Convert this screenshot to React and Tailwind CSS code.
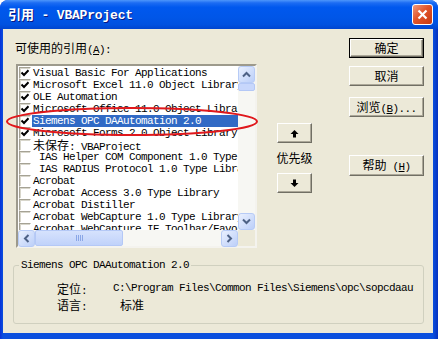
import React from "react";

const mono = "font-['Liberation_Mono',monospace] text-[11px] tracking-[-0.6px]";
const cjk = "font-['Noto_Sans_CJK_SC',sans-serif] text-[12px] tracking-normal";

function Zh({ children }) {
  return <span className={cjk}>{children}</span>;
}

const rows = [
  { on: true, text: "Visual Basic For Applications" },
  { on: true, text: "Microsoft Excel 11.0 Object Library" },
  { on: true, text: "OLE Automation" },
  { on: true, text: "Microsoft Office 11.0 Object Library" },
  { on: true, sel: true, text: "Siemens OPC DAAutomation 2.0" },
  { on: true, text: "Microsoft Forms 2.0 Object Library" },
  { on: false, zh: "未保存", text: ": VBAProject" },
  { on: false, text: " IAS Helper COM Component 1.0 Type Library" },
  { on: false, text: " IAS RADIUS Protocol 1.0 Type Library" },
  { on: false, text: "Acrobat" },
  { on: false, text: "Acrobat Access 3.0 Type Library" },
  { on: false, text: "Acrobat Distiller" },
  { on: false, text: "Acrobat WebCapture 1.0 Type Library" },
  { on: false, text: "Acrobat WebCapture IE Toolbar/Favorites Context Menu" },
];

function Check({ on }) {
  return (
    <div className="w-[12px] h-[12px] shrink-0 bg-white border border-t-[#A5A294] border-l-[#A5A294] border-r-white border-b-white shadow-[inset_1px_1px_0_#D8D6CB]">
      {on && (
        <svg width="10" height="10" viewBox="0 0 10 10">
          <path d="M1.5 4.5 L4 7 L8.5 2.2" stroke="#000" strokeWidth="2" fill="none" />
        </svg>
      )}
    </div>
  );
}

function Chevron({ dir }) {
  const rot = { up: 0, down: 180, left: 270, right: 90 }[dir];
  return (
    <svg width="9" height="9" viewBox="0 0 9 9" style={{ transform: `rotate(${rot}deg)` }}>
      <path d="M1 6.5 L4.5 3 L8 6.5" stroke="#4D6185" strokeWidth="2" fill="none" />
    </svg>
  );
}

function SBtn({ dir }) {
  return (
    <div className="w-[17px] h-[17px] shrink-0 flex items-center justify-center rounded-[3px] border border-[#B7CBF6] bg-[linear-gradient(135deg,#E9F0FE,#BCCFF9)]">
      <Chevron dir={dir} />
    </div>
  );
}

function Btn({ children, def, className = "" }) {
  return (
    <div className={`${def ? "border border-black" : ""} ${className}`}>
      <div className="h-full flex items-center justify-center bg-[#ECE9D8] border border-t-white border-l-white border-r-[#716F64] border-b-[#716F64] shadow-[inset_-1px_-1px_0_#ACA899] leading-[12px]">
        {children}
      </div>
    </div>
  );
}

function Arrow({ down }) {
  return (
    <svg width="9" height="9" viewBox="0 0 9 9" style={{ transform: down ? "rotate(180deg)" : undefined }}>
      <path d="M4.5 1 L8.5 5 L6 5 L6 8.5 L3 8.5 L3 5 L0.5 5 Z" fill="#000" />
    </svg>
  );
}

function RefList() {
  return (
    <div className="w-[241px] h-[184px] bg-white border-2 border-t-[#9D9A8C] border-l-[#9D9A8C] border-r-[#F4F3EE] border-b-[#F4F3EE] flex flex-col">
      <div className="flex h-[164px]">
        <div className="w-[220px] h-[164px] overflow-hidden pt-[1px]">
          {rows.map((r, i) => (
            <div key={i} className="flex h-[12px] items-center">
              <div className="ml-[1px]">
                <Check on={r.on} />
              </div>
              <div
                className={`ml-[1px] pl-[1px] flex-1 h-[12px] leading-[12px] whitespace-pre overflow-hidden ${mono} ${
                  r.sel ? "bg-[#316AC5] text-white" : "text-black"
                }`}
              >
                {r.zh && <Zh>{r.zh}</Zh>}
                {r.text}
              </div>
            </div>
          ))}
        </div>
        <div className="w-[17px] h-[164px] flex flex-col bg-[#F7F7F3]">
          <SBtn dir="up" />
          <div className="h-[8px] rounded-[2px] border border-[#B4C8F6] bg-[#C8D7FC]" />
          <div className="flex-1" />
          <SBtn dir="down" />
        </div>
      </div>
      <div className="flex h-[16px]">
        <div className="w-[220px] flex bg-[#F7F7F3]">
          <SBtn dir="left" />
          <div className="w-[88px] h-[16px] rounded-[2px] border border-[#B4C8F6] bg-[linear-gradient(180deg,#D6E2FD,#C0D2FA)] flex items-center justify-center gap-[1px]">
            {[0, 1, 2, 3].map((k) => (
              <div key={k} className="w-[1px] h-[6px] bg-[#8AA6E6]" />
            ))}
          </div>
          <div className="flex-1" />
          <SBtn dir="right" />
        </div>
        <div className="w-[17px] bg-[#ECE9D8]" />
      </div>
    </div>
  );
}

export default function App() {
  return (
    <div className="w-[438px] h-[339px] bg-white">
      <div className="relative w-[438px] h-[339px] rounded-t-[8px] overflow-hidden bg-[linear-gradient(90deg,#0831D9_0px,#0A4FDE_3px,#0A4FDE_433px,#0631BE_438px)] flex flex-col">
        <div className="h-[29px] shrink-0 flex items-center pl-[8px] pr-[5px] bg-[linear-gradient(180deg,#4D96FB_0%,#1C6CF3_10%,#0058EE_25%,#0056E8_60%,#0051E0_85%,#0045CF_100%)]">
          <div className="flex-1 text-white font-bold [text-shadow:1px_1px_#0A1883] leading-[14px] whitespace-pre">
            <span className="font-['Noto_Sans_CJK_SC',sans-serif] text-[13px]">引用</span>
            <span className="font-['Liberation_Mono',monospace] text-[13px] tracking-[-0.2px]"> - VBAProject</span>
          </div>
          <div className="w-[21px] h-[21px] rounded-[3px] border border-white bg-[linear-gradient(135deg,#F09A7E,#E2542A_45%,#C53A12)] flex items-center justify-center">
            <svg width="11" height="11" viewBox="0 0 11 11">
              <path d="M1.5 1.5 L9.5 9.5 M9.5 1.5 L1.5 9.5" stroke="#fff" strokeWidth="2.2" />
            </svg>
          </div>
        </div>

        <div className="ml-[3px] mr-[5px] h-[304px] bg-[#ECE9D8] text-black flex flex-col">
          <div className="flex h-[219px] pl-[13px]">
            <div className="w-[241px]">
              <div className="mt-[12px] ml-[-1px] h-[12px] leading-[12px] whitespace-pre">
                <Zh>可使用的引用</Zh>
                <span className={mono}>
                  (<span className="underline">A</span>):
                </span>
              </div>
              <div className="mt-[11px]">
                <RefList />
              </div>
            </div>

            <div className="ml-[20px] w-[35px] flex flex-col items-center">
              <Btn className="mt-[94px] h-[20px] w-[35px]">
                <Arrow />
              </Btn>
              <div className="mt-[8px] h-[12px] leading-[12px] whitespace-nowrap">
                <Zh>优先级</Zh>
              </div>
              <Btn className="mt-[10px] h-[20px] w-[35px]">
                <Arrow down />
              </Btn>
            </div>

            <div className="ml-[37px] w-[75px] flex flex-col">
              <Btn def className="mt-[9px] h-[20px]">
                <Zh>确定</Zh>
              </Btn>
              <Btn className="mt-[8px] h-[20px]">
                <Zh>取消</Zh>
              </Btn>
              <Btn className="mt-[11px] h-[20px]">
                <span className="whitespace-pre">
                  <Zh>浏览</Zh>
                  <span className={mono}>
                    (<span className="underline">B</span>)...
                  </span>
                </span>
              </Btn>
              <Btn className="mt-[38px] h-[21px]">
                <span className="whitespace-pre">
                  <Zh>帮助</Zh>
                  <span className={mono}>
                    {" "}(<span className="underline">H</span>)
                  </span>
                </span>
              </Btn>
            </div>
          </div>

          <fieldset className="ml-[10px] mt-[11px] w-[411px] h-[65px] border border-[#D0D0BF] rounded-[3px] pl-[5px]">
            <legend className={`px-[2px] leading-[12px] ${mono}`}>Siemens OPC DAAutomation 2.0</legend>
            <div className="mt-[11px] ml-[38px] flex h-[12px] leading-[12px]">
              <div className="w-[56px] whitespace-pre">
                <Zh>定位</Zh>
                <span className={mono}>:</span>
              </div>
              <div className={`w-[301px] overflow-hidden whitespace-pre ${mono}`}>
                C:\Program Files\Common Files\Siemens\opc\sopcdaauto.dll
              </div>
            </div>
            <div className="mt-[4px] ml-[38px] flex h-[12px] leading-[12px]">
              <div className="w-[56px] whitespace-pre">
                <Zh>语言</Zh>
                <span className={mono}>:</span>
              </div>
              <div className="ml-[7px]">
                <Zh>标准</Zh>
              </div>
            </div>
          </fieldset>
        </div>

        <svg
          className="absolute left-[3px] top-[106px]"
          width="258"
          height="32"
          viewBox="0 0 258 32"
        >
          <ellipse cx="129" cy="15.5" rx="125" ry="13.5" stroke="#E0181C" strokeWidth="2" fill="none" />
        </svg>
      </div>
    </div>
  );
}
